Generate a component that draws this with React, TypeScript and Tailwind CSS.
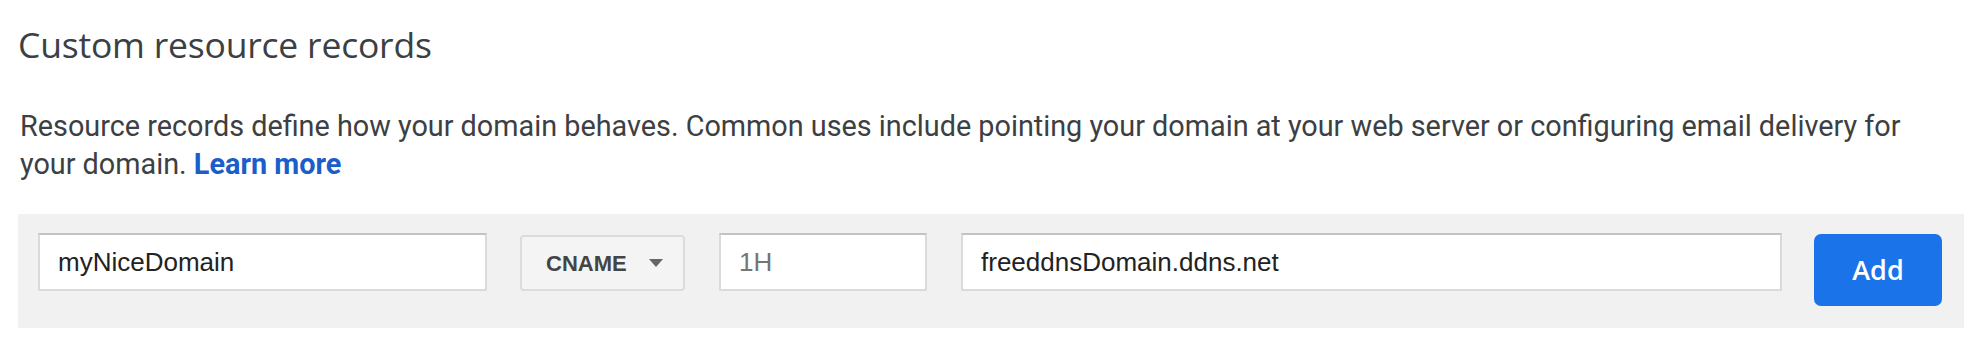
import React from "react";

const inputCls =
  "h-[58px] bg-white border-2 border-[#dadada] border-t-[#c2c2c2] pl-[18px] text-[26px] text-[#222] font-['Liberation_Sans',Arial,sans-serif] outline-none placeholder:text-[#757575]";

export default function App() {
  return (
    <div className="w-full min-h-[354px] bg-white pl-[18px] pr-[6px]">
      <h2 className="pt-[20px] text-[35.5px] leading-[48px] text-[#3c4043] font-['Open_Sans',sans-serif] tracking-[-0.2px]">
        Custom resource records
      </h2>

      <p className="mt-[39px] max-w-[1920px] pl-[2px] text-[28.8px] leading-[38px] text-[#3c4043] font-['Roboto',sans-serif]">
        Resource records define how your domain behaves. Common uses include
        pointing your domain at your web server or configuring email delivery
        for your domain.{" "}
        <a href="#" className="font-bold text-[#1a5dcb]">
          Learn more
        </a>
      </p>

      <div className="mt-[31px] flex items-start bg-[#f1f1f1] pt-[19px] pb-[22px] pl-[20px] pr-[22px]">
        <input
          readOnly
          value="myNiceDomain"
          className={`${inputCls} w-[449px]`}
        />

        {/* type select */}
        <button className="ml-[33px] mt-[2px] flex h-[56px] w-[165px] items-center gap-[22px] rounded-[4px] border-2 border-[#dcdcdc] bg-[#f4f4f4] pl-[24px] font-['Liberation_Sans',Arial,sans-serif] text-[22px] font-bold text-[#444]">
          CNAME
          <svg width="14" height="8" viewBox="0 0 14 8">
            <path d="M0 0h14L7 8z" fill="#666" />
          </svg>
        </button>

        <input placeholder="1H" className={`${inputCls} ml-[34px] w-[208px]`} />

        <input
          readOnly
          value="freeddnsDomain.ddns.net"
          className={`${inputCls} ml-[34px] min-w-0 flex-1`}
        />

        <button className="ml-[32px] mt-[1px] h-[72px] w-[128px] shrink-0 rounded-[7px] bg-[#1a73e8] font-['Open_Sans',sans-serif] text-[27px] font-semibold text-white">
          Add
        </button>
      </div>
    </div>
  );
}
